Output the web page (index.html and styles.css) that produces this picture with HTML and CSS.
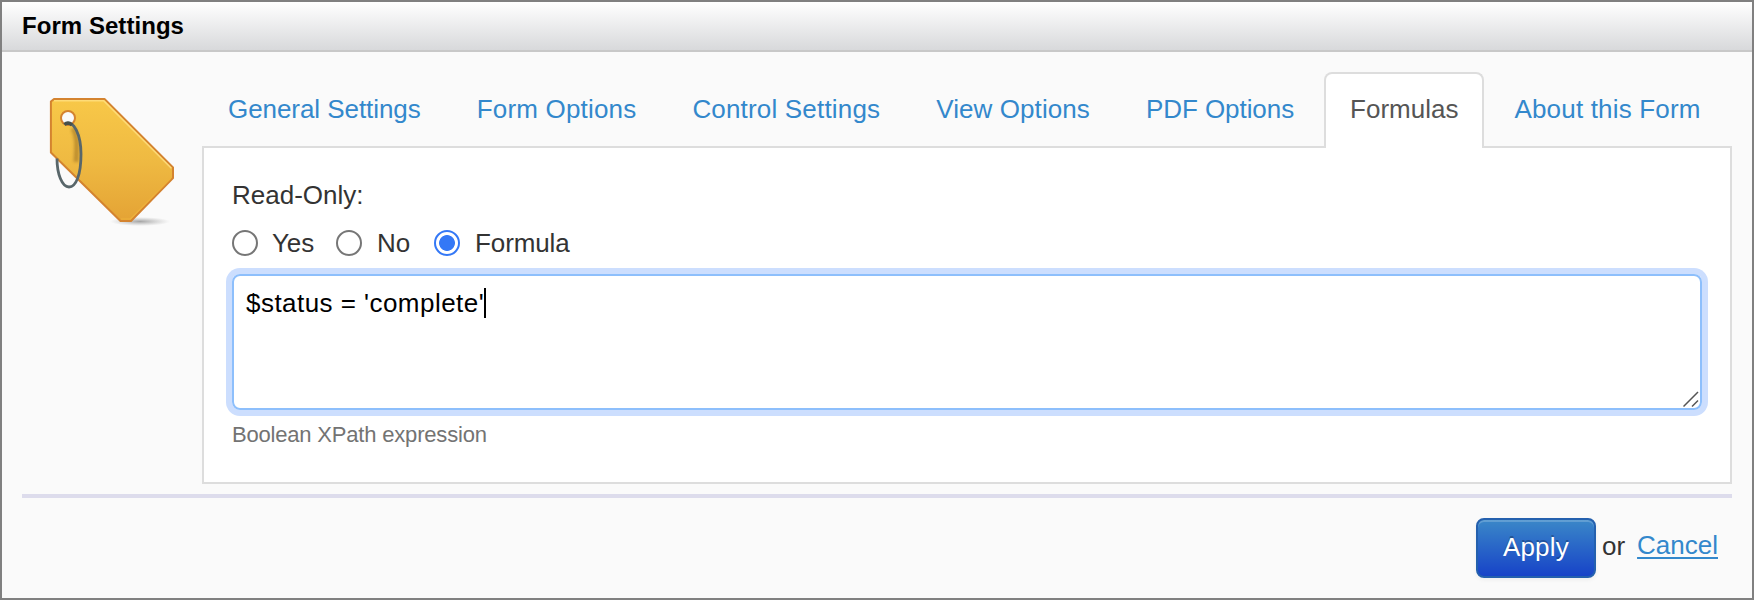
FILE: index.html
```html
<!DOCTYPE html>
<html lang="en">
<head>
<meta charset="utf-8">
<title>Form Settings</title>
<link rel="stylesheet" href="styles.css">
</head>
<body>
<div class="dialog">
  <header class="dialog-header">Form Settings</header>
  <div class="dialog-body">
    <div class="main">
      <svg class="tag-icon" viewBox="40 88 144 144" width="144" height="144" aria-hidden="true">
        <defs>
          <linearGradient id="tag-fill" x1="0" y1="0" x2="0" y2="1">
            <stop offset="0" stop-color="#f8c848"/>
            <stop offset=".5" stop-color="#efba42"/>
            <stop offset="1" stop-color="#e4a335"/>
          </linearGradient>
          <radialGradient id="tag-shadow">
            <stop offset="0" stop-color="#777" stop-opacity=".65"/>
            <stop offset="1" stop-color="#999" stop-opacity="0"/>
          </radialGradient>
          <filter id="soft" x="-100%" y="-20%" width="300%" height="140%"><feGaussianBlur stdDeviation="1.5"/></filter>
        </defs>
        <ellipse cx="140" cy="221.500" rx="30" ry="4.500" fill="url(#tag-shadow)"/>
        <path fill-rule="evenodd" fill="url(#tag-fill)" stroke="#d4832f" stroke-width="2" stroke-linejoin="round" d="M54 98.900H104.500L173 167.500V178L131 221H120.500L50.900 152.500V101.500Z M75 118a7 7 0 1 0-14 0a7 7 0 1 0 14 0Z"/>
        <path d="M54 100.700H103.700L171.400 168.300" fill="none" stroke="#ffdf80" stroke-width="1.500" opacity=".85"/>
        <path d="M121 219L130.500 219L171 178" fill="none" stroke="#eeb23a" stroke-width="1.200"/>
        <path d="M73 128C78 138 77 146 76 162" fill="none" stroke="#9e7224" stroke-width="5" opacity=".6" filter="url(#soft)"/>
        <path d="M64.500 124.500C74 118 81 136 81 154C81 175 76 187 69 187C62 187 57 174 57 158.500" fill="none" stroke="#58666a" stroke-width="2.800"/>
        <path d="M64.500 124.500Q68 121.500 72 125" fill="none" stroke="#47504b" stroke-width="3.400"/>
      </svg>
      <div class="settings">
        <nav class="tabs">
          <a class="tab general">General Settings</a>
          <a class="tab wide">Form Options</a>
          <a class="tab wide">Control Settings</a>
          <a class="tab view">View Options</a>
          <a class="tab pdf">PDF Options</a>
          <a class="tab active">Formulas</a>
          <a class="tab wide">About this Form</a>
        </nav>
        <section class="panel">
          <div class="field-label">Read-Only:</div>
          <div class="radios">
            <span class="choice yes"><i class="radio"></i>Yes</span>
            <span class="choice no"><i class="radio"></i>No</span>
            <span class="choice"><i class="radio checked"></i>Formula</span>
          </div>
          <div class="textarea" role="textbox"><span>$status = 'complete'</span><i class="caret"></i>
            <svg class="grip" width="16" height="16" viewBox="0 0 16 16" aria-hidden="true"><path d="M.500 15.500L15 1M9 15.500L15 9.500" stroke="#555" stroke-width="1.500" fill="none"/></svg>
          </div>
          <div class="help">Boolean XPath expression</div>
        </section>
      </div>
    </div>
    <footer class="actions">
      <button class="apply">Apply</button>
      <span class="or">or</span>
      <a class="cancel">Cancel</a>
    </footer>
  </div>
</div>
</body>
</html>
```
FILE: styles.css
```css
* { box-sizing: border-box; }
body {
  margin: 0;
  font: 26px/40px "Liberation Sans", Arial, sans-serif;
  color: #333;
}
.dialog {
  height: 600px;
  border: 2px solid #808080;
  background: #fafafa;
}
.dialog-header {
  height: 50px;
  padding: 4px 20px 0;
  border-bottom: 2px solid #c8c8c8;
  background: linear-gradient(#fff, #d8d9db);
  color: #000;
  font-size: 24px;
  font-weight: bold;
  letter-spacing: .05px;
}
.dialog-body { padding: 20px 20px 0; }
.main {
  display: flex;
  height: 426px;
  border-bottom: 4px solid #dddcec;
}
.tag-icon { flex: none; margin: 16px 18px 0; }
.settings { width: 1530px; }
.tabs {
  display: flex;
  gap: 4px;
  height: 76px;
}
.tab {
  height: 76px;
  padding: 15px 24px 0;
  border: 2px solid transparent;
  color: #3388cc;
  white-space: nowrap;
}
.tab.general { letter-spacing: -.06px; }
.tab.wide { letter-spacing: .18px; }
.tab.view { letter-spacing: .08px; }
.tab.pdf { letter-spacing: -.06px; }
.tab.active {
  position: relative;
  border-color: #ddd;
  border-bottom: 0;
  border-radius: 8px 8px 0 0;
  background: #fff;
  color: #555;
}
.panel {
  height: 338px;
  margin-top: -2px;
  padding: 27px 28px 0;
  border: 2px solid #ddd;
  background: #fff;
}
.field-label { height: 40px; }
.radios {
  display: flex;
  height: 59px;
  padding-top: 8px;
}
.choice { display: flex; letter-spacing: -.1px; }
.yes { width: 104px; }
.no { width: 98px; }
.radio {
  width: 26px;
  height: 26px;
  margin: 7px 15px 0 0;
  border: 2px solid #767676;
  border-radius: 50%;
}
.yes .radio { margin-right: 14px; }
.radio.checked {
  border-color: #3478f6;
  background: radial-gradient(circle, #3478f6 7.500px, #fff 8.300px);
}
.textarea {
  position: relative;
  display: flex;
  height: 136px;
  padding: 7px 12px;
  border: 2px solid #8dbffc;
  border-radius: 8px;
  box-shadow: 0 0 0 6px #ccdefe;
  color: #000;
  letter-spacing: .46px;
}
.caret {
  width: 2px;
  height: 30px;
  margin-top: 5px;
  background: #000;
}
.grip {
  position: absolute;
  right: 1px;
  bottom: 1px;
}
.help {
  padding-top: 5px;
  color: #737373;
  font-size: 22px;
  letter-spacing: -.19px;
}
.actions {
  display: flex;
  justify-content: flex-end;
  padding: 20px 14px 0 0;
}
.apply {
  width: 120px;
  height: 60px;
  padding: 0 0 2px;
  border: 2px solid #2460ae;
  border-radius: 8px;
  background: linear-gradient(#3a87c8, #1743c8);
  box-shadow: inset 0 2px 0 rgba(255, 255, 255, .2), 0 2px 4px rgba(0, 0, 0, .05);
  color: #fff;
  font: inherit;
  letter-spacing: .2px;
  text-shadow: 0 -2px 0 rgba(0, 0, 0, .25);
}
.or { margin: 8px 12px 0 6px; }
.cancel {
  margin-top: 7px;
  color: #3388cc;
  text-decoration: underline;
  text-decoration-thickness: 2px;
  text-underline-offset: 3px;
}
```
